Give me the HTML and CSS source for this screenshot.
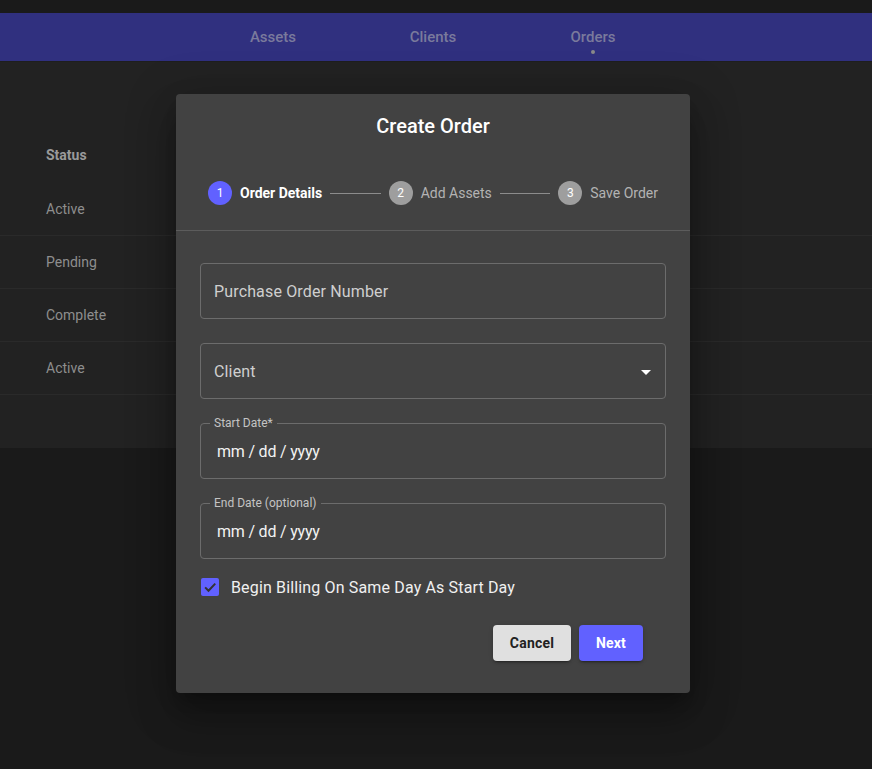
FILE: index.html
```html
<!DOCTYPE html>
<html lang="en">
<head>
<meta charset="utf-8">
<title>Create Order</title>
<link rel="stylesheet" href="styles.css">
</head>
<body>
<div class="topstrip"></div>
<nav class="nav">
  <a class="nav-item">Assets</a>
  <a class="nav-item">Clients</a>
  <a class="nav-item active">Orders</a>
</nav>
<main class="panel">
  <div class="table">
    <div class="row head"><span>Status</span></div>
    <div class="row"><span>Active</span></div>
    <div class="row"><span>Pending</span></div>
    <div class="row"><span>Complete</span></div>
    <div class="row"><span>Active</span></div>
    <div class="row empty"></div>
  </div>
</main>

<div class="modal">
  <h2 class="title">Create Order</h2>
  <div class="stepper">
    <div class="step current"><span class="circle">1</span><span class="label">Order Details</span></div>
    <div class="connector"></div>
    <div class="step"><span class="circle">2</span><span class="label">Add Assets</span></div>
    <div class="connector"></div>
    <div class="step"><span class="circle">3</span><span class="label">Save Order</span></div>
  </div>
  <div class="divider"></div>
  <form class="form">
    <div class="field"><span class="placeholder">Purchase Order Number</span></div>
    <div class="field select"><span class="placeholder">Client</span><span class="arrow"></span></div>
    <div class="field date"><span class="float">Start Date*</span><span class="value">mm / dd / yyyy</span></div>
    <div class="field date last"><span class="float">End Date (optional)</span><span class="value">mm / dd / yyyy</span></div>
    <label class="check">
      <span class="box"><svg width="18" height="18" viewBox="0 0 24 24"><path d="M5.5 12.5l4.5 4.5L19 7.5" fill="none" stroke="#333" stroke-width="2.6"/></svg></span>
      <span>Begin Billing On Same Day As Start Day</span>
    </label>
    <div class="actions">
      <button type="button" class="btn cancel">Cancel</button>
      <button type="button" class="btn next">Next</button>
    </div>
  </form>
</div>
</body>
</html>
```
FILE: styles.css
```css
* { box-sizing: border-box; }
html, body { margin: 0; padding: 0; }
body {
  background: #1a1a1a;
  font-family: Roboto, "Liberation Sans", sans-serif;
  width: 872px;
  height: 769px;
  overflow: hidden;
  position: relative;
}
.topstrip { height: 13px; background: #1a1a1a; }
.nav {
  height: 49px;
  background: #30307f;
  border-bottom: 1px solid #1e1e1e;
  display: flex;
  justify-content: center;
  padding-right: 6px;
}
.nav-item {
  width: 160px;
  text-align: center;
  color: #7a7a9c;
  font-size: 15px;
  font-weight: 500;
  padding-top: 15px;
  position: relative;
}
.nav-item.active::after {
  content: "";
  position: absolute;
  left: 50%;
  top: 37px;
  width: 4px;
  height: 4px;
  margin-left: -2px;
  border-radius: 50%;
  background: #8a8a8a;
}
.panel {
  background: #222222;
  height: 386px;
  padding-top: 65px;
}
.row {
  height: 53px;
  border-bottom: 1px solid #2a2a2a;
  display: flex;
  align-items: center;
  padding-left: 46px;
  color: #8e8e8e;
  font-size: 14px;
}
.row.head {
  height: 56px;
  border-bottom: none;
  font-weight: 700;
  color: #9a9a9a;
}
.row.empty { height: 54px; border-bottom: none; }

.modal {
  position: absolute;
  left: 176px;
  top: 94px;
  width: 514px;
  height: 599px;
  background: #424242;
  border-radius: 4px;
  box-shadow: 0 11px 15px -7px rgba(0,0,0,.3), 0 24px 38px 3px rgba(0,0,0,.2), 0 9px 46px 8px rgba(0,0,0,.18);
}
.title {
  margin: 0;
  padding-top: 20px;
  height: 44px;
  line-height: 24px;
  text-align: center;
  color: #fff;
  font-size: 20px;
  font-weight: 500;
}
.stepper {
  display: flex;
  align-items: center;
  height: 92px;
  padding: 18px 32px 0 32px;
}
.step { display: flex; align-items: center; gap: 8px; }
.circle {
  width: 24px;
  height: 24px;
  border-radius: 50%;
  background: #9e9e9e;
  color: #fff;
  font-size: 12px;
  display: flex;
  align-items: center;
  justify-content: center;
}
.step.current .circle { background: #6161ff; }
.label { font-size: 14px; color: #b3b3b3; }
.step.current .label { color: #fff; font-weight: 700; }
.connector {
  flex: 1;
  height: 1px;
  background: #8c8c8c;
  margin: 0 8px;
}
.divider { height: 1px; background: #5c5c5c; }
.form {
  padding: 32px 24px 0 24px;
  display: flex;
  flex-direction: column;
}
.field {
  height: 56px;
  border: 1px solid #6c6c6c;
  border-radius: 4px;
  display: flex;
  align-items: center;
  padding-left: 13px;
  margin-bottom: 24px;
  position: relative;
}
.field.last { margin-bottom: 0; }
.placeholder { font-size: 16px; color: #cfcfcf; letter-spacing: 0.15px; }
.select .placeholder { flex: 1; }
.arrow {
  width: 0; height: 0;
  border-left: 5px solid transparent;
  border-right: 5px solid transparent;
  border-top: 5px solid #fff;
  margin-right: 14px;
  margin-top: 2px;
}
.date { padding-left: 16px; }
.float {
  position: absolute;
  left: 9px;
  top: -8px;
  padding: 0 4px;
  background: #424242;
  font-size: 12px;
  line-height: 14px;
  color: #c4c4c4;
}
.value { font-size: 16px; color: #f2f2f2; letter-spacing: -0.2px; }
.check {
  display: flex;
  align-items: center;
  gap: 12px;
  margin-top: 19px;
  padding-left: 1px;
  height: 18px;
  color: #f0f0f0;
  font-size: 16px;
  letter-spacing: 0.15px;
}
.box {
  width: 18px;
  height: 18px;
  border-radius: 2px;
  background: #6161ff;
  display: flex;
  align-items: center;
  justify-content: center;
}
.actions {
  display: flex;
  justify-content: flex-end;
  gap: 8px;
  margin-top: 29px;
  margin-right: 23px;
}
.btn {
  height: 36px;
  border: none;
  border-radius: 4px;
  font-family: Roboto, "Liberation Sans", sans-serif;
  font-size: 14px;
  font-weight: 700;
  letter-spacing: 0.2px;
  padding: 0 12px;
  box-shadow: 0 3px 1px -2px rgba(0,0,0,.2), 0 2px 2px 0 rgba(0,0,0,.14), 0 1px 5px 0 rgba(0,0,0,.12);
}
.cancel { background: #e0e0e0; color: #222; width: 78px; }
.next { background: #6161ff; color: #fff; width: 64px; }
```
